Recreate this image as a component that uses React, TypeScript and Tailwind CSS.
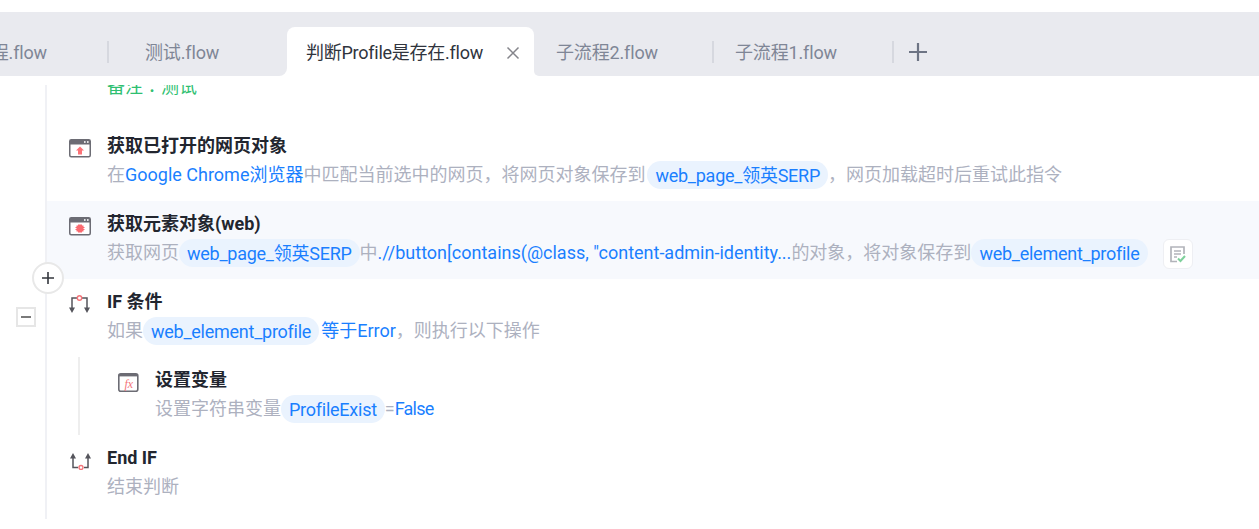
import React from "react";

const FONT = "[font-family:'Roboto','Noto_Sans_CJK_SC',sans-serif]";

function Pill({ children }: { children: React.ReactNode }) {
  return (
    <span className="inline-flex h-[28px] translate-y-px items-center rounded-full bg-[#eaf3fe] px-2 tracking-[-0.25px] text-[#1a7fff]">
      {children}
    </span>
  );
}

function WindowIcon({ kind }: { kind: "arrow" | "bug" }) {
  return (
    <svg width="22" height="20" viewBox="0 -1 22 20" fill="none">
      <rect x="0.75" y="0.75" width="20.5" height="17" rx="1.5" fill="#fff" stroke="#6c6c74" strokeWidth="1.5" />
      <rect x="1" y="1" width="20" height="4.5" fill="#6c6c74" />
      <rect x="15" y="2.2" width="1.6" height="1.6" fill="#fff" />
      <rect x="18" y="2.2" width="1.6" height="1.6" fill="#fff" />
      {kind === "arrow" ? (
        <path d="M11 7.5 15 11.5H13V15.5H9V11.5H7Z" fill="#fb7277" />
      ) : (
        <path d="M9 7.5H13V8.5H14.5V10H15.5V11H14.5V12H15.5V13H14.5V14.5H13V15.5H9V14.5H7.5V13H6.5V12H7.5V11H6.5V10H7.5V8.5H9Z" fill="#fb6a70" />
      )}
    </svg>
  );
}

function FxIcon() {
  return (
    <svg width="22" height="20" viewBox="0 -1 22 20" fill="none">
      <rect x="1.8" y="0.8" width="19" height="17.4" rx="2" fill="#fff" stroke="#6c6c74" strokeWidth="1.6" />
      <rect x="1.8" y="1" width="19" height="2.4" fill="#6c6c74" />
      <text x="7.5" y="14.5" fontSize="12" fontStyle="italic" fontFamily="Liberation Serif" fill="#f4757a">
        fx
      </text>
    </svg>
  );
}

function IfIcon() {
  return (
    <svg width="22" height="20" viewBox="0 0 22 20" fill="none">
      <path d="M8 4H3V14M13 4H18V14" stroke="#55555c" strokeWidth="1.5" />
      <path d="M0 13.5H6L3 19ZM15 13.5H21L18 19Z" fill="#55555c" />
      <circle cx="10.5" cy="4" r="2.2" fill="#fff" stroke="#f4757a" strokeWidth="1.4" />
    </svg>
  );
}

function EndIfIcon() {
  return (
    <svg width="22" height="20" viewBox="0 0 22 20" fill="none">
      <path d="M9 17.5H4V7M15 17.5H19V7" stroke="#55555c" strokeWidth="1.5" />
      <path d="M1 8.5H7L4 3ZM16 8.5H22L19 3Z" fill="#55555c" />
      <circle cx="12" cy="17.5" r="2" fill="#fff" stroke="#f4757a" strokeWidth="1.4" />
    </svg>
  );
}

function NoteCheckIcon() {
  return (
    <svg width="16" height="17" viewBox="0 0 16 17" fill="none">
      <path d="M7 15.5H1V1H14V8" stroke="#b2b4ba" strokeWidth="1.7" />
      <path d="M4 5H11M4 8H11M4 11H7" stroke="#b2b4ba" strokeWidth="1.4" />
      <path d="M8 12.5 10.5 15 15 10" stroke="#7ed09b" strokeWidth="2" />
    </svg>
  );
}

function Step({
  icon,
  title,
  children,
  active,
}: {
  icon: React.ReactNode;
  title: string;
  children: React.ReactNode;
  active?: boolean;
}) {
  return (
    <div className={`flex h-[78px] pl-[22px] pt-[12px] ${active ? "bg-[#f7f9fd]" : ""}`}>
      <div className="w-[38px] shrink-0 pt-[3px]">{icon}</div>
      <div className="min-w-0">
        <div className="h-[25px] text-[18px] leading-[22px] font-bold text-[#22262f]">{title}</div>
        <div className="flex h-[28px] items-center whitespace-nowrap text-[18px] text-[#adb1bf]">{children}</div>
      </div>
    </div>
  );
}

function Tab({ label, pad, width, rounded }: { label: string; pad: string; width: string; rounded?: "l" | "r" }) {
  return (
    <div className={`h-full shrink-0 bg-white ${width}`}>
      <div
        className={`flex h-full items-center bg-[#e9eaef] pt-[2px] ${pad} ${
          rounded === "r" ? "rounded-br-lg" : rounded === "l" ? "rounded-bl-[5px]" : ""
        }`}
      >
        <span className="whitespace-nowrap text-[18px] tracking-[-0.15px] text-[#7f8696]">{label}</span>
      </div>
    </div>
  );
}

function Divider() {
  return <div className="z-10 -mr-[2px] h-[22px] w-[2px] shrink-0 bg-[#d6d8df]" />;
}

export default function App() {
  return (
    <div className={`flex h-[529px] w-full flex-col overflow-hidden bg-white ${FONT}`}>
      <div className="mt-[12px] h-[15px] shrink-0 bg-[#e9eaef]" />
      <div className="flex h-[49px] shrink-0 items-center overflow-hidden bg-[#e9eaef] -ml-[73px]">
        <Tab label="主流程.flow" pad="pl-[28px]" width="w-[180px]" />
        <Divider />
        <Tab label="测试.flow" pad="pl-[38px]" width="w-[180px]" rounded="r" />
        <div className="h-full w-[247px] shrink-0 bg-[#e9eaef]">
          <div className="flex h-full items-center rounded-t-lg bg-white pl-[19px] pr-[14px] pt-[2px]">
            <span className="flex-1 whitespace-nowrap text-[18px] tracking-[-0.25px] text-[#30343d]">判断Profile是存在.flow</span>
            <svg width="14" height="14" viewBox="0 0 14 14" stroke="#85858b" strokeWidth="1.5">
              <path d="M1.5 1.5 12.5 12.5M12.5 1.5 1.5 12.5" />
            </svg>
          </div>
        </div>
        <Tab label="子流程2.flow" pad="pl-[22px]" width="w-[178px]" rounded="l" />
        <Divider />
        <Tab label="子流程1.flow" pad="pl-[23px]" width="w-[180px]" />
        <Divider />
        <svg className="ml-[16px] shrink-0" width="20" height="20" viewBox="0 0 20 20" stroke="#6d7484" strokeWidth="2.2">
          <path d="M10 1V19M1 10H19" />
        </svg>
      </div>

      <div className="relative mt-[9px] min-h-0 flex-1 overflow-hidden">
        <div className="ml-[45px] h-full border-l-2 border-[#f0f1f5]">
          <div className="-mt-[10px] h-[48px] pl-[60px] text-[18px] leading-[20px] text-[#2fbf71]">
            备注<span className="[font-family:'Noto_Sans_CJK_TC',sans-serif]">：</span>测试
          </div>

          <Step icon={<WindowIcon kind="arrow" />} title="获取已打开的网页对象">
            在<span className="text-[#1a7fff]">Google Chrome浏览器</span>中匹配当前选中的网页，将网页对象保存到
            <span className="ml-[2px] flex items-center">
              <Pill>web_page_领英SERP</Pill>
            </span>
            ，网页加载超时后重试此指令
          </Step>

          <Step active icon={<WindowIcon kind="bug" />} title="获取元素对象(web)">
            获取网页<Pill>web_page_领英SERP</Pill>中
            <span className="text-[#1a7fff]">.//button[contains(@class, "content-admin-identity...</span>
            的对象，将对象保存到<Pill>web_element_profile</Pill>
            <span className="ml-[15px] flex h-[30px] w-[30px] translate-y-[2px] items-center justify-center rounded-md border border-[#eeeff3] bg-white">
              <NoteCheckIcon />
            </span>
          </Step>

          <Step icon={<IfIcon />} title="IF 条件">
            如果<Pill>web_element_profile</Pill>
            <span className="ml-[2px] text-[#1a7fff]">等于Error</span>，则执行以下操作
          </Step>

          <div className="ml-[31px] border-l-2 border-[#eeeeee]">
            <div className="ml-[15px]">
              <Step icon={<FxIcon />} title="设置变量">
                设置字符串变量<Pill>ProfileExist</Pill>=<span className="tracking-[-0.8px] text-[#1a7fff]">False</span>
              </Step>
            </div>
          </div>

          <Step icon={<EndIfIcon />} title="End IF">
            结束判断
          </Step>
        </div>

        <button className="absolute left-[32px] top-[177px] flex h-[32px] w-[32px] items-center justify-center rounded-full border-2 border-[#e8e8e8] bg-white">
          <svg width="14" height="14" viewBox="0 0 14 14" stroke="#33363d" strokeWidth="1.6">
            <path d="M7 1V13M1 7H13" />
          </svg>
        </button>
        <div className="absolute left-[16px] top-[222px] flex h-[20px] w-[20px] items-center justify-center border-2 border-[#e6e6e6] bg-white">
          <div className="h-[2px] w-[10px] bg-[#7a7a7a]" />
        </div>
      </div>
    </div>
  );
}
